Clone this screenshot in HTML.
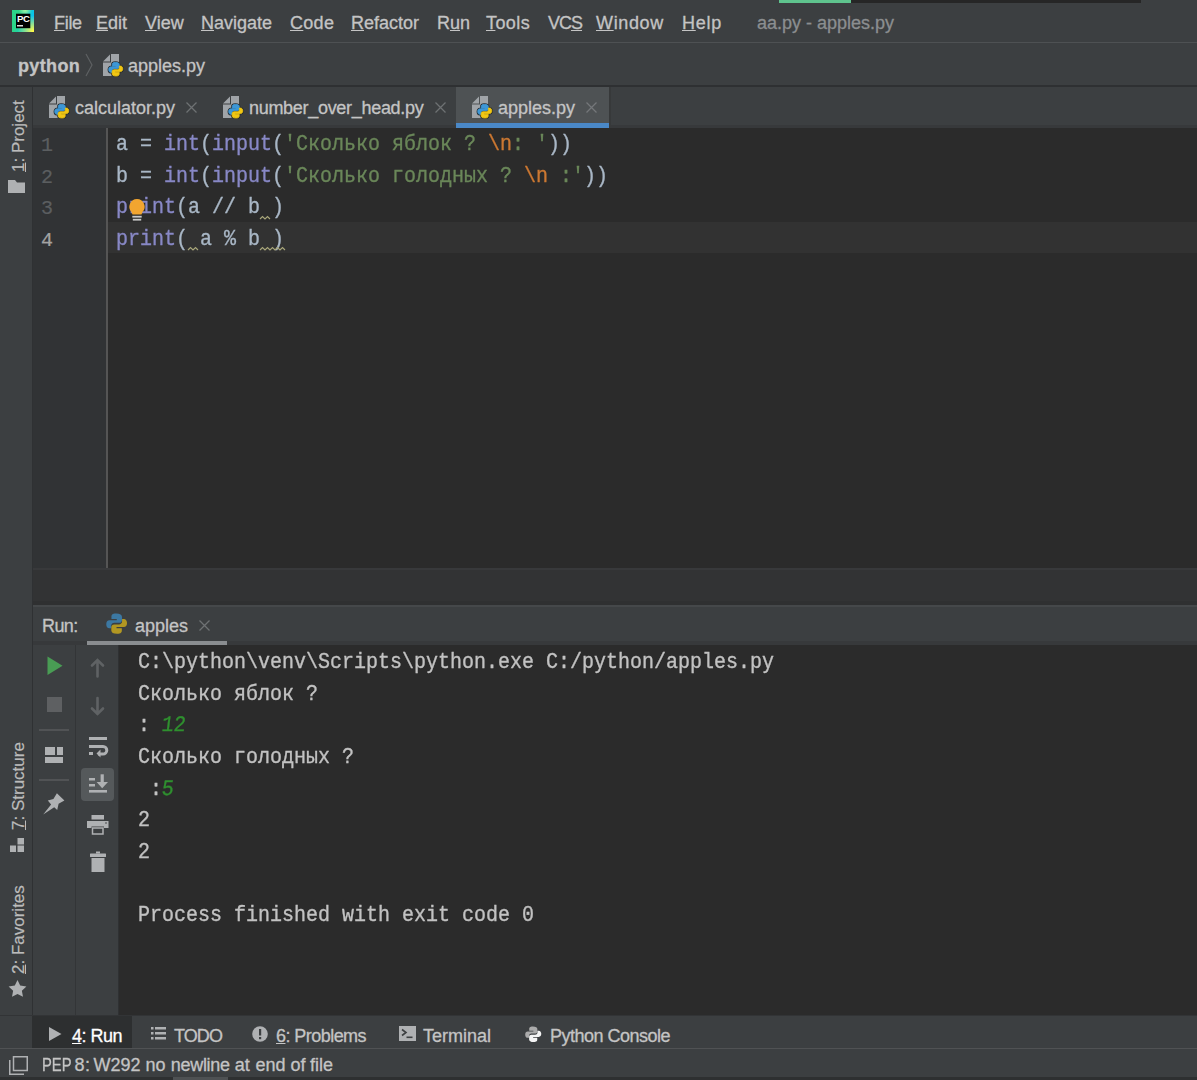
<!DOCTYPE html>
<html><head><meta charset="utf-8">
<style>
*{margin:0;padding:0;box-sizing:border-box}
html,body{width:1197px;height:1080px;overflow:hidden;background:#3C3F41;font-family:"Liberation Sans",sans-serif;color:#BBBBBB}
.a{position:absolute}
.ui{position:absolute;font-size:18px;line-height:20px;white-space:nowrap;color:#C4C4C4;-webkit-text-stroke:0.3px currentColor}
.mono{position:absolute;font-family:"Liberation Mono",monospace;font-size:22px;line-height:31.67px;white-space:pre;transform:scaleX(0.9091);transform-origin:0 0;-webkit-text-stroke:0.35px currentColor}
u{text-decoration:underline;text-underline-offset:1px;text-decoration-thickness:1.3px}
.kw{color:#8888C6}.st{color:#6A8759}.es{color:#CC7832}
.vt{position:absolute;font-size:17px;line-height:20px;white-space:nowrap;color:#BBBBBB;-webkit-text-stroke:0.2px currentColor;transform:rotate(-90deg);transform-origin:0 0}
svg{position:absolute;overflow:visible}
</style></head><body>
<svg width="0" height="0" style="position:absolute">
<defs>
<g id="py">
<path d="M7.6 0.4C4.6 0.4 4.1 1.6 4.1 2.9V4.6H8.1V5.4H2.6C1.1 5.4 0.2 6.6 0.2 8.4C0.2 10.2 1.1 11.5 2.6 11.5H3.9V9.6C3.9 8.3 5 7.4 6.2 7.4H9.9C11 7.4 12 6.5 12 5.4V2.9C12 1.4 10.6 0.4 7.6 0.4Z" fill="#3D97D6" stroke="#3D97D6" stroke-width="0.9" stroke-linejoin="round"/>
<path d="M8.4 15.6C11.4 15.6 11.9 14.4 11.9 13.1V11.4H7.9V10.6H13.4C14.9 10.6 15.8 9.4 15.8 7.6C15.8 5.8 14.9 4.5 13.4 4.5H12.1V6.4C12.1 7.7 11 8.6 9.8 8.6H6.1C5 8.6 4 9.5 4 10.6V13.1C4 14.6 5.4 15.6 8.4 15.6Z" fill="#F2C713" stroke="#F2C713" stroke-width="0.9" stroke-linejoin="round"/>
</g>
<g id="pyl">
<path d="M7.6 0.4C4.6 0.4 4.1 1.6 4.1 2.9V4.6H8.1V5.4H2.6C1.1 5.4 0.2 6.6 0.2 8.4C0.2 10.2 1.1 11.5 2.6 11.5H3.9V9.6C3.9 8.3 5 7.4 6.2 7.4H9.9C11 7.4 12 6.5 12 5.4V2.9C12 1.4 10.6 0.4 7.6 0.4Z" fill="#3D97D6"/>
<path d="M8.4 15.6C11.4 15.6 11.9 14.4 11.9 13.1V11.4H7.9V10.6H13.4C14.9 10.6 15.8 9.4 15.8 7.6C15.8 5.8 14.9 4.5 13.4 4.5H12.1V6.4C12.1 7.7 11 8.6 9.8 8.6H6.1C5 8.6 4 9.5 4 10.6V13.1C4 14.6 5.4 15.6 8.4 15.6Z" fill="#F2C713"/>
</g>
<g id="pyo">
<path d="M7.6 0.4C4.6 0.4 4.1 1.6 4.1 2.9V4.6H8.1V5.4H2.6C1.1 5.4 0.2 6.6 0.2 8.4C0.2 10.2 1.1 11.5 2.6 11.5H3.9V9.6C3.9 8.3 5 7.4 6.2 7.4H9.9C11 7.4 12 6.5 12 5.4V2.9C12 1.4 10.6 0.4 7.6 0.4Z" fill="none" stroke="#24292d" stroke-width="2.4" stroke-linejoin="round"/>
<path d="M8.4 15.6C11.4 15.6 11.9 14.4 11.9 13.1V11.4H7.9V10.6H13.4C14.9 10.6 15.8 9.4 15.8 7.6C15.8 5.8 14.9 4.5 13.4 4.5H12.1V6.4C12.1 7.7 11 8.6 9.8 8.6H6.1C5 8.6 4 9.5 4 10.6V13.1C4 14.6 5.4 15.6 8.4 15.6Z" fill="none" stroke="#24292d" stroke-width="2.4" stroke-linejoin="round"/>
<use href="#py"/>
</g>
<g id="pyfile">
<path d="M0 7.5L7 0.5V7.5Z" fill="#A0A4A8"/>
<path d="M8 0H16V22H0V8.5H8Z" fill="#A0A4A8"/>
<use href="#pyo" transform="translate(5.5,8) scale(0.9)"/>
</g>
</defs>
</svg>

<!-- ===== menu bar ===== -->
<div class="a" style="left:779px;top:0;width:362px;height:2.5px;background:#262626"></div>
<div class="a" style="left:779px;top:0;width:72px;height:2.5px;background:#5FC48E"></div>
<div class="a" style="left:0;top:42px;width:1197px;height:1px;background:#4E5153"></div>
<!-- logo -->
<svg style="left:12px;top:10px" width="22" height="22"><defs>
<linearGradient id="lgc" x1="0.4" y1="0" x2="1" y2="0.2"><stop offset="0" stop-color="#07C3F2" stop-opacity="0"/><stop offset="1" stop-color="#07C3F2"/></linearGradient>
<radialGradient id="lgy" cx="1" cy="1" r="0.75"><stop offset="0.1" stop-color="#FCF84A"/><stop offset="1" stop-color="#FCF84A" stop-opacity="0"/></radialGradient>
<radialGradient id="lgl" cx="0.6" cy="0" r="0.3"><stop offset="0" stop-color="#A8F5A0"/><stop offset="1" stop-color="#A8F5A0" stop-opacity="0"/></radialGradient>
</defs>
<rect width="22" height="22" fill="#2BD58A"/><rect width="22" height="22" fill="url(#lgc)"/><rect width="22" height="22" fill="url(#lgy)"/><rect width="22" height="22" fill="url(#lgl)"/>
<rect x="4" y="3.7" width="14.3" height="14.5" fill="#000"/>
<text x="4.9" y="12.3" font-family="Liberation Sans" font-weight="bold" font-size="9.6" fill="#fff" letter-spacing="-0.4">PC</text>
<rect x="5" y="15" width="6" height="1.5" fill="#ddd"/>
</svg>
<div class="ui" style="left:54px;top:13px;letter-spacing:-0.3px"><u>F</u>ile</div>
<div class="ui" style="left:96px;top:13px"><u>E</u>dit</div>
<div class="ui" style="left:145px;top:13px"><u>V</u>iew</div>
<div class="ui" style="left:201px;top:13px"><u>N</u>avigate</div>
<div class="ui" style="left:290px;top:13px;letter-spacing:0.3px"><u>C</u>ode</div>
<div class="ui" style="left:351px;top:13px"><u>R</u>efactor</div>
<div class="ui" style="left:437px;top:13px">R<u>u</u>n</div>
<div class="ui" style="left:486px;top:13px;letter-spacing:0.4px"><u>T</u>ools</div>
<div class="ui" style="left:548px;top:13px;letter-spacing:-1px">VC<u>S</u></div>
<div class="ui" style="left:596px;top:13px;letter-spacing:0.65px"><u>W</u>indow</div>
<div class="ui" style="left:682px;top:13px;letter-spacing:0.75px"><u>H</u>elp</div>
<div class="ui" style="left:757px;top:13px;color:#8B8E90">aa.py - apples.py</div>

<!-- ===== breadcrumb ===== -->
<div class="ui" style="left:18px;top:56px;font-weight:bold;letter-spacing:0.35px">python</div>
<svg style="left:85px;top:53px" width="8" height="24"><path d="M1 1L7 12L1 23" fill="none" stroke="#5E6163" stroke-width="1.2"/></svg>
<svg style="left:103px;top:54px" width="21" height="24"><use href="#pyfile"/></svg>
<div class="ui" style="left:128px;top:56px">apples.py</div>
<div class="a" style="left:0;top:85px;width:1197px;height:2px;background:#2E3032"></div>

<!-- ===== left strip ===== -->
<div class="a" style="left:32px;top:87px;width:1px;height:929px;background:#2F3133"></div>
<div class="vt" style="left:9px;top:172px"><u>1</u>: Project</div>
<svg style="left:8px;top:180px" width="17" height="13"><path d="M0 0H7L9 2.5H17V13H0Z" fill="#AFB1B3"/></svg>
<div class="vt" style="left:9px;top:830px"><u>7</u>: Structure</div>
<svg style="left:10px;top:838px" width="14" height="14"><rect x="7.5" y="0" width="6.5" height="6.5" fill="#AFB1B3"/><rect x="0" y="7.5" width="6" height="6.5" fill="#AFB1B3"/><rect x="7.5" y="7.5" width="6.5" height="6.5" fill="#AFB1B3"/></svg>
<div class="vt" style="left:9px;top:974px"><u>2</u>: Favorites</div>
<svg style="left:8px;top:979px" width="19" height="19" viewBox="0 0 24 24"><path d="M12.00 1.20L15.41 8.31L23.22 9.35L17.52 14.79L18.94 22.55L12.00 18.80L5.06 22.55L6.48 14.79L0.78 9.35L8.59 8.31Z" fill="#AFB1B3"/></svg>

<!-- ===== tab bar ===== -->
<div class="a" style="left:33px;top:125px;width:1164px;height:3px;background:#37393B"></div>
<div class="a" style="left:456px;top:87px;width:153px;height:41px;background:#4E5254"></div>
<div class="a" style="left:609px;top:87px;width:2px;height:41px;background:#37393A"></div>
<div class="a" style="left:456px;top:123px;width:153px;height:5px;background:#4A88C7"></div>
<svg style="left:49px;top:96px" width="21" height="24"><use href="#pyfile"/></svg>
<div class="ui" style="left:75px;top:98px">calculator.py</div>
<svg style="left:186px;top:102px" width="11" height="11"><path d="M0.5 0.5L10.5 10.5M10.5 0.5L0.5 10.5" stroke="#6E7173" stroke-width="1.3"/></svg>
<svg style="left:223px;top:96px" width="21" height="24"><use href="#pyfile"/></svg>
<div class="ui" style="left:249px;top:98px;letter-spacing:-0.3px">number_over_head.py</div>
<svg style="left:435px;top:102px" width="11" height="11"><path d="M0.5 0.5L10.5 10.5M10.5 0.5L0.5 10.5" stroke="#6E7173" stroke-width="1.3"/></svg>
<svg style="left:472px;top:96px" width="21" height="24"><use href="#pyfile"/></svg>
<div class="ui" style="left:498px;top:98px">apples.py</div>
<svg style="left:586px;top:102px" width="11" height="11"><path d="M0.5 0.5L10.5 10.5M10.5 0.5L0.5 10.5" stroke="#74777A" stroke-width="1.3"/></svg>

<!-- ===== editor ===== -->
<div class="a" style="left:33px;top:128px;width:1164px;height:440px;background:#2B2B2B"></div>
<div class="a" style="left:33px;top:128px;width:73px;height:440px;background:#313335"></div>
<div class="a" style="left:108px;top:222px;width:1089px;height:31px;background:#323232"></div>
<div class="a" style="left:106px;top:128px;width:2px;height:440px;background:#555555"></div>
<div class="mono" style="left:116px;top:129px;color:#A9B7C6">a = <span class="kw">int</span>(<span class="kw">input</span>(<span class="st">'Сколько яблок ? </span><span class="es">\n</span><span class="st">: '</span>))
b = <span class="kw">int</span>(<span class="kw">input</span>(<span class="st">'Сколько голодных ? </span><span class="es">\n</span><span class="st"> :'</span>))
<span class="kw">print</span>(a // b )
<span class="kw">print</span>( a % b )</div>
<div class="mono" style="left:41px;top:130px;color:#5B5E60;font-size:20px;transform:none;-webkit-text-stroke:0.2px currentColor">1
2
3
<span style="color:#A4A3A3">4</span></div>
<!-- wavy underlines -->
<svg style="left:260px;top:215.5px" width="13" height="4"><path d="M0 3L2.5 0.6L5 3L7.5 0.6L10 3" fill="none" stroke="#A8A67A" stroke-width="1.2"/></svg>
<svg style="left:188px;top:246.5px" width="13" height="4"><path d="M0 3L2.5 0.6L5 3L7.5 0.6L10 3" fill="none" stroke="#A8A67A" stroke-width="1.2"/></svg>
<svg style="left:260px;top:246.5px" width="25" height="4"><path d="M0 3L2.5 0.6L5 3L7.5 0.6L10 3L12.5 0.6L15 3L17.5 0.6L20 3L22.5 0.6L25 3" fill="none" stroke="#A8A67A" stroke-width="1.2"/></svg>
<!-- light bulb -->
<svg style="left:128px;top:198px" width="18" height="24"><path d="M9 1A7.7 7.7 0 0 1 14.5 14L13.5 16.5H4.5L3.5 14A7.7 7.7 0 0 1 9 1Z" fill="#F2A530"/><rect x="4.3" y="17.8" width="9.4" height="1.8" fill="#C9C9C9"/><rect x="4.8" y="20.8" width="8.4" height="1.8" fill="#C9C9C9"/></svg>

<!-- ===== gap ===== -->
<div class="a" style="left:33px;top:568px;width:1164px;height:37px;background:#323334"></div>
<div class="a" style="left:33px;top:568px;width:1164px;height:2px;background:#38393B"></div>
<div class="a" style="left:33px;top:601px;width:1164px;height:4px;background:#2F3031"></div>

<!-- ===== run header ===== -->
<div class="a" style="left:33px;top:605px;width:1164px;height:40px;background:#3C3F41"></div>
<div class="a" style="left:33px;top:605px;width:1164px;height:2px;background:#45484A"></div>
<div class="a" style="left:33px;top:641px;width:1164px;height:4px;background:#37393B"></div>
<div class="ui" style="left:42px;top:616px;letter-spacing:-0.6px">Run:</div>
<svg style="left:106px;top:613px" width="22" height="22"><use href="#pyl" transform="scale(1.33)" style="opacity:0.65"/></svg>
<div class="ui" style="left:135px;top:616px">apples</div>
<svg style="left:199px;top:620px" width="11" height="11"><path d="M0.5 0.5L10.5 10.5M10.5 0.5L0.5 10.5" stroke="#6E7173" stroke-width="1.3"/></svg>
<div class="a" style="left:87px;top:641px;width:140px;height:4px;background:#8A8D90"></div>

<!-- ===== run toolbars ===== -->
<div class="a" style="left:75px;top:645px;width:1px;height:371px;background:#333537"></div>
<svg style="left:47px;top:656px" width="16" height="20"><path d="M0.5 0.5L15.5 9.75L0.5 19Z" fill="#499C54"/></svg>
<div class="a" style="left:47px;top:697px;width:15px;height:15px;background:#5E6062"></div>
<div class="a" style="left:39px;top:729px;width:30px;height:2px;background:#515355"></div>
<svg style="left:45px;top:747px" width="18" height="16"><rect x="0" y="0" width="10" height="8" fill="#AFB1B3"/><rect x="12" y="0" width="6" height="8" fill="#AFB1B3"/><rect x="0" y="10" width="18" height="6" fill="#AFB1B3"/></svg>
<div class="a" style="left:39px;top:779px;width:30px;height:2px;background:#515355"></div>
<svg style="left:43px;top:793px" width="23" height="23"><path d="M13.9 0.2L21.4 7.4L15.6 10.8L14.2 16.9L11.2 14.2L0.2 21.5L8.1 11.6L4.8 7.4L10.4 6.1Z" fill="#AFB1B3"/></svg>

<svg style="left:90px;top:658px" width="16" height="20"><path d="M7.5 2.5V18.5M2 7.5L7.5 2L13 7.5" fill="none" stroke="#5F6264" stroke-width="2.6" stroke-linecap="round"/></svg>
<svg style="left:90px;top:697px" width="16" height="20"><path d="M7.5 1V17M2 11.5L7.5 17L13 11.5" fill="none" stroke="#5F6264" stroke-width="2.6" stroke-linecap="round"/></svg>
<svg style="left:88px;top:736px" width="22" height="22"><rect x="1" y="1" width="18" height="3" fill="#AFB1B3"/><rect x="1" y="9" width="12" height="3" fill="#AFB1B3"/><rect x="1" y="16" width="4" height="3" fill="#AFB1B3"/><path d="M12 10.5H15A3.8 3.8 0 0 1 15 18.1H10" fill="none" stroke="#AFB1B3" stroke-width="3"/><path d="M8.5 17.6L12.5 13.6V21.6Z" fill="#AFB1B3"/></svg>
<div class="a" style="left:81px;top:768px;width:33px;height:33px;background:#55595B;border-radius:4px"></div>
<svg style="left:88px;top:774px" width="22" height="20"><rect x="1" y="4" width="6" height="2.5" fill="#AFB1B3"/><rect x="1" y="10" width="6" height="2.5" fill="#AFB1B3"/><rect x="1" y="16" width="18" height="2.6" fill="#AFB1B3"/><rect x="12.6" y="0.3" width="3.2" height="9" fill="#AFB1B3"/><path d="M8.6 8H20L14.2 14.2Z" fill="#AFB1B3"/></svg>
<svg style="left:87px;top:815px" width="22" height="20"><rect x="4.5" y="0" width="12.5" height="4.5" fill="#AFB1B3"/><path d="M0 6H21.5V13H17V11.5H4.5V13H0Z" fill="#AFB1B3"/><path d="M5.5 13H16V19H5.5Z" fill="none" stroke="#AFB1B3" stroke-width="1.5"/><circle cx="19" cy="8" r="0.8" fill="#3C3F41"/></svg>
<svg style="left:90px;top:851px" width="17" height="22"><rect x="6" y="0.5" width="4" height="2" fill="#AFB1B3"/><rect x="0" y="2.5" width="16" height="3.5" rx="0.5" fill="#AFB1B3"/><path d="M1.5 7H14.5V21H1.5Z" fill="#AFB1B3"/></svg>
<div class="a" style="left:118px;top:645px;width:1px;height:371px;background:#2F3133"></div>

<!-- ===== console ===== -->
<div class="a" style="left:119px;top:645px;width:1078px;height:371px;background:#2B2B2B"></div>
<div class="mono" style="left:138px;top:647px;color:#C2C2C2">C:\python\venv\Scripts\python.exe C:/python/apples.py
Сколько яблок ?
: <span style="color:#2F902F;display:inline-block;transform:skewX(-8deg)">12</span>
Сколько голодных ?
 :<span style="color:#2F902F;display:inline-block;transform:skewX(-8deg)">5</span>
2
2

Process finished with exit code 0</div>

<!-- ===== bottom tool strip ===== -->
<div class="a" style="left:0;top:1015px;width:1197px;height:1px;background:#323436"></div>
<div class="a" style="left:32px;top:1016px;width:100px;height:32px;background:#2D2F30"></div>
<svg style="left:49px;top:1027px" width="13" height="14"><path d="M0 0L12.5 7L0 14Z" fill="#AFB1B3"/></svg>
<div class="ui" style="left:72px;top:1026px;color:#FFFFFF;letter-spacing:-0.5px"><u>4</u>: Run</div>
<svg style="left:151px;top:1027px" width="15" height="13"><rect x="0" y="0" width="2.5" height="2.5" fill="#AFB1B3"/><rect x="4" y="0" width="11" height="2.5" fill="#AFB1B3"/><rect x="0" y="5" width="2.5" height="2.5" fill="#AFB1B3"/><rect x="4" y="5" width="11" height="2.5" fill="#AFB1B3"/><rect x="0" y="10" width="2.5" height="2.5" fill="#AFB1B3"/><rect x="4" y="10" width="11" height="2.5" fill="#AFB1B3"/></svg>
<div class="ui" style="left:174px;top:1026px;letter-spacing:-0.9px">TODO</div>
<svg style="left:252px;top:1026px" width="16" height="16"><circle cx="8" cy="8" r="7.8" fill="#AFB1B3"/><rect x="7" y="3" width="2.2" height="6.5" fill="#3C3F41"/><rect x="7" y="11" width="2.2" height="2.2" fill="#3C3F41"/></svg>
<div class="ui" style="left:276px;top:1026px;letter-spacing:-0.55px"><u>6</u>: Problems</div>
<svg style="left:399px;top:1026px" width="17" height="15"><rect x="0" y="0" width="17" height="15" fill="#AFB1B3"/><path d="M3 3.5L7 6.5L3 9.5" fill="none" stroke="#3C3F41" stroke-width="1.6"/><rect x="7.5" y="10.5" width="6" height="1.6" fill="#3C3F41"/></svg>
<div class="ui" style="left:423px;top:1026px">Terminal</div>
<svg style="left:525px;top:1026px" width="17" height="17"><use href="#pyl" transform="scale(1.03)" style="filter:grayscale(1) brightness(1.25)"/></svg>
<div class="ui" style="left:550px;top:1026px;letter-spacing:-0.5px">Python Console</div>

<!-- ===== status bar ===== -->
<div class="a" style="left:0;top:1077px;width:1197px;height:3px;background:#2E3031"></div>
<div class="a" style="left:173px;top:1077px;width:55px;height:3px;background:#4E5153"></div>
<div class="a" style="left:0;top:1048px;width:1197px;height:1px;background:#505254"></div>
<svg style="left:9px;top:1056px" width="19" height="19"><path d="M4.5 0.75H18.25V14.5H4.5Z" fill="none" stroke="#AFB1B3" stroke-width="1.5"/><path d="M0.75 4V18.25H15" fill="none" stroke="#AFB1B3" stroke-width="1.5"/></svg>
<div class="ui" style="left:41.8px;top:1055px;letter-spacing:0px;transform:scaleX(0.82);transform-origin:0 0">PEP</div><div class="ui" style="left:74.6px;top:1055px;letter-spacing:0.3px">8:</div><div class="ui" style="left:93.6px;top:1055px">W292</div><div class="ui" style="left:145.4px;top:1055px">no</div><div class="ui" style="left:170.8px;top:1055px;letter-spacing:-0.3px">newline</div><div class="ui" style="left:234.8px;top:1055px">at</div><div class="ui" style="left:255.5px;top:1055px">end</div><div class="ui" style="left:290.5px;top:1055px">of</div><div class="ui" style="left:309.9px;top:1055px">file</div>
</body></html>
